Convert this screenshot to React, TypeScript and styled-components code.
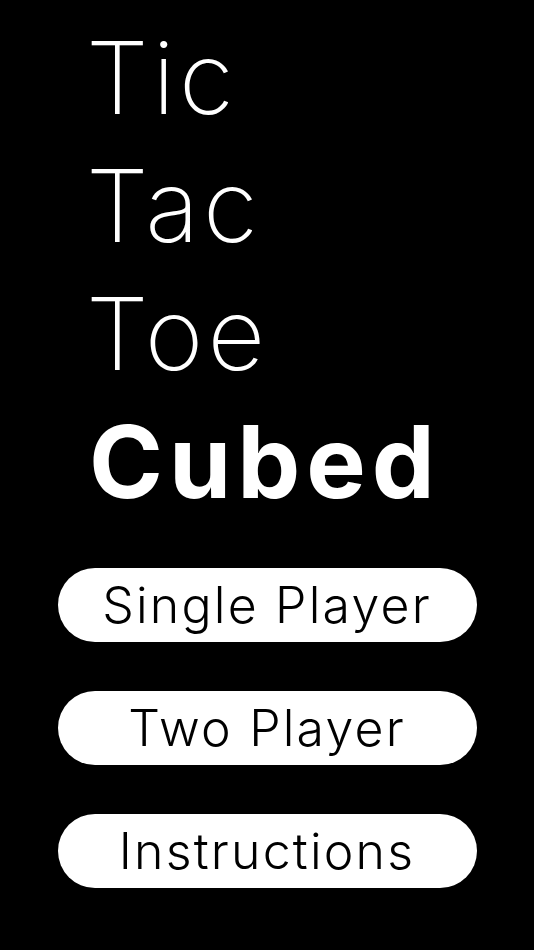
import styled, { createGlobalStyle } from "styled-components";

const GlobalStyle = createGlobalStyle`
  html, body {
    margin: 0;
    padding: 0;
    background: #000;
  }
`;

const Screen = styled.div`
  width: 534px;
  height: 950px;
  background: #000;
  box-sizing: border-box;
  padding: 14px 0 0 0;
  font-family: Inter, "DejaVu Sans", sans-serif;
  display: flex;
  flex-direction: column;
`;

const Title = styled.h1`
  margin: 0;
  padding-left: 86px;
  color: #fff;
  display: flex;
  flex-direction: column;
`;

const Word = styled.span<{ $bold?: boolean }>`
  font-size: 100px;
  line-height: 128px;
  font-weight: ${(p) => (p.$bold ? 700 : 200)};
  letter-spacing: ${(p) => (p.$bold ? "6px" : "4px")};
  padding-left: ${(p) => (p.$bold ? "3px" : "0")};
`;

const Menu = styled.div`
  margin-top: 42px;
  display: flex;
  flex-direction: column;
  align-items: center;
  gap: 49px;
`;

const MenuButton = styled.button`
  width: 419px;
  height: 74px;
  border: none;
  border-radius: 37px;
  background: #fff;
  color: #000;
  font-family: Inter, "DejaVu Sans", sans-serif;
  font-size: 50px;
  font-weight: 300;
  letter-spacing: 2.2px;
  padding: 0;
  cursor: pointer;
`;

export default function App() {
  return (
    <>
      <GlobalStyle />
      <Screen>
        <Title>
          <Word>Tic</Word>
          <Word>Tac</Word>
          <Word>Toe</Word>
          <Word $bold>Cubed</Word>
        </Title>
        <Menu>
          <MenuButton>Single Player</MenuButton>
          <MenuButton>Two Player</MenuButton>
          <MenuButton>Instructions</MenuButton>
        </Menu>
      </Screen>
    </>
  );
}
